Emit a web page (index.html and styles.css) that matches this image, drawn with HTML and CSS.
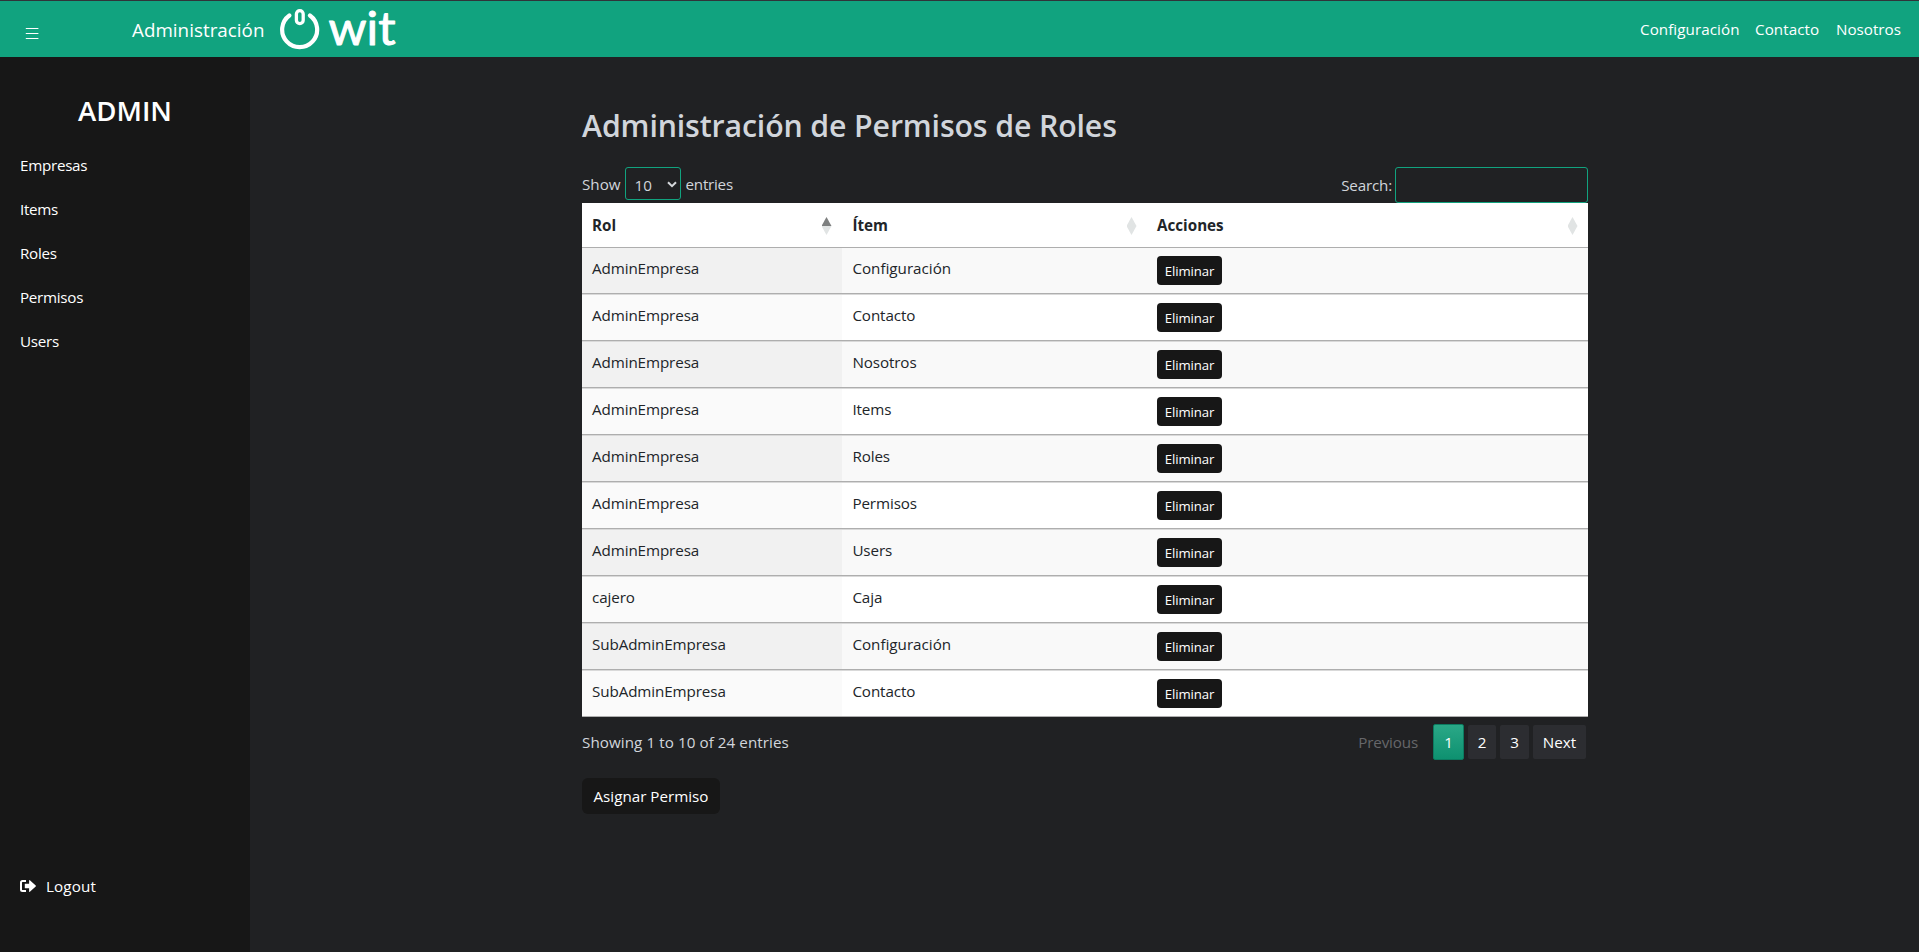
FILE: index.html
```html
<!DOCTYPE html>
<html lang="es">
<head>
<meta charset="utf-8">
<title>Administración</title>
<link rel="stylesheet" href="styles.css">
</head>
<body>
<header class="topbar">
  <svg class="menu-icon" width="14" height="13" viewBox="0 0 14 13"><path d="M.8 1.500h12.600M.8 6.500h12.600M.8 11.500h12.600" stroke="#fff" stroke-width="1.200"/></svg>
  <span class="brand">Administración</span>
  <svg class="logo" width="118" height="56" viewBox="0 -7 118 56">
    <g fill="none" stroke="#fff" stroke-linecap="round">
      <path d="M9.350 7.500A17.500 17.500 0 1 0 29.950 7.500" stroke-width="4.200"/>
      <rect x="16.400" y="2.600" width="6.800" height="13" rx="3.400" stroke-width="3.300"/>
    </g>
    <text class="logo-text" x="48.500" y="37.300" textLength="67" lengthAdjust="spacingAndGlyphs">wit</text>
  </svg>
  <nav class="topnav"><a class="n1">Configuración</a><a class="n2">Contacto</a><a class="n3">Nosotros</a></nav>
</header>
<div class="layout">
  <aside class="sidebar">
    <h3 class="side-title">ADMIN</h3>
    <nav class="side-nav"><a>Empresas</a><a>Items</a><a>Roles</a><a>Permisos</a><a>Users</a></nav>
    <a class="logout"><svg width="16" height="12" viewBox="0 0 16 12"><path d="M6 1H2.500Q1 1 1 2.500v7Q1 11 2.500 11H6" fill="none" stroke="#fff" stroke-width="2"/><path d="M4.800 3.800h4.300V.6Q9.200-.2 9.900.3l5.800 5.100q.5.600 0 1.200L9.900 11.700q-.7.500-.8-.3V8.200H4.800z" fill="#fff"/></svg><span>Logout</span></a>
  </aside>
  <main class="content">
    <h2 class="title">Administración de Permisos de Roles</h2>
    <div class="controls">
      <label class="length">Show <span class="select-wrap"><select><option>10</option></select><svg width="10" height="7" viewBox="0 0 10 7"><path d="M1 1.200l4 4 4-4" fill="none" stroke="#d5d8dc" stroke-width="2"/></svg></span> <span class="entries">entries</span></label>
      <label class="search">Search:<input type="text"></label>
    </div>
    <table class="roles">
      <colgroup><col class="c1"><col class="c2"><col class="c3"></colgroup>
      <thead><tr>
        <th><div>Rol<i class="sort asc"></i></div></th>
        <th><div>Ítem<i class="sort"></i></div></th>
        <th><div>Acciones<i class="sort"></i></div></th>
      </tr></thead>
      <tbody>
        <tr><td>AdminEmpresa</td><td class="conf">Configuración</td><td><button>Eliminar</button></td></tr>
        <tr><td>AdminEmpresa</td><td>Contacto</td><td><button>Eliminar</button></td></tr>
        <tr><td>AdminEmpresa</td><td>Nosotros</td><td><button>Eliminar</button></td></tr>
        <tr><td>AdminEmpresa</td><td>Items</td><td><button>Eliminar</button></td></tr>
        <tr><td>AdminEmpresa</td><td>Roles</td><td><button>Eliminar</button></td></tr>
        <tr><td>AdminEmpresa</td><td>Permisos</td><td><button>Eliminar</button></td></tr>
        <tr><td>AdminEmpresa</td><td>Users</td><td><button>Eliminar</button></td></tr>
        <tr><td>cajero</td><td>Caja</td><td><button>Eliminar</button></td></tr>
        <tr><td>SubAdminEmpresa</td><td class="conf">Configuración</td><td><button>Eliminar</button></td></tr>
        <tr><td>SubAdminEmpresa</td><td>Contacto</td><td><button>Eliminar</button></td></tr>
      </tbody>
    </table>
    <div class="footer">
      <span class="info">Showing 1 to 10 of 24 entries</span>
      <div class="pager"><span class="prev">Previous</span><span class="page active">1</span><span class="page p2">2</span><span class="page p3">3</span><span class="page next">Next</span></div>
    </div>
    <button class="assign">Asignar Permiso</button>
  </main>
</div>
</body>
</html>
```
FILE: styles.css
```css
* { box-sizing: border-box; }
body {
  margin: 0;
  height: 952px;
  overflow: hidden;
  display: flex;
  flex-direction: column;
  background: #202123;
  color: #d1d5db;
  font: 15.2px/24px "Open Sans", "Noto Sans", sans-serif;
}
button, select, input { font: inherit; margin: 0; }
.topbar {
  height: 57px;
  flex: none;
  display: flex;
  align-items: flex-start;
  background: #11a37f;
  border-top: 1px solid #303439;
  color: #fff;
}
.menu-icon { margin: 26px 0 0 25px; }
.brand { margin: 16px 0 0 93px; width: 148px; font-size: 18.8px; line-height: 26px; letter-spacing: .03px; }
.logo-text {
  font: 400 46px Lato, sans-serif;
  fill: #fff;
  stroke: #fff;
  stroke-width: .9px;
  stroke-linejoin: round;
}
.topnav { display: flex; margin: 16px 18px 0 auto; }
.n1 { width: 115px; letter-spacing: .06px; }
.n2 { width: 81px; letter-spacing: .06px; }
.n3 { width: 65px; }
.layout { flex: 1; display: flex; }
.sidebar {
  width: 250px;
  display: flex;
  flex-direction: column;
  background: #171717;
  color: #fff;
}
.side-title {
  margin: 33px 0 0;
  text-align: center;
  font-size: 27.6px;
  line-height: 40px;
  font-weight: 600;
}
.side-nav { display: flex; flex-direction: column; padding: 13px 20px; }
.side-nav a { height: 44px; padding: 10px 0; letter-spacing: -.28px; }
.logout { display: flex; margin: auto 20px 54px; align-items: center; gap: 10px; letter-spacing: .15px; }
.content { margin-left: 332px; width: 1006px; padding-top: 50px; }
.title { margin: 0; height: 60px; font-size: 30.3px; line-height: 38px; font-weight: 600; letter-spacing: -.14px; color: #d1d5db; }
.controls { display: flex; justify-content: space-between; height: 36px; }
.length { display: flex; height: 33px; line-height: 34px; }
.select-wrap { position: relative; margin: 0 5px 0 4px; }
.select-wrap select {
  appearance: none;
  display: block;
  width: 56px;
  height: 33px;
  padding: 0 0 0 9px;
  background: transparent;
  border: 1px solid #11a37f;
  border-radius: 3px;
  color: #d1d5db;
}
.select-wrap svg { position: absolute; right: 4px; top: 14px; }
.entries { letter-spacing: -.25px; }
.search { display: flex; line-height: 36px; gap: 3px; letter-spacing: -.18px; }
.search input {
  width: 193px;
  height: 36px;
  background: transparent;
  border: 1px solid #11a37f;
  border-radius: 3px;
}
.roles { width: 1006px; table-layout: fixed; border-collapse: separate; border-spacing: 0; background: #fff; color: #212529; }
.c1 { width: 260px; }
.c2 { width: 305px; }
.c3 { width: 441px; }
.roles th { padding: 10px; height: 45px; border-bottom: 1px solid #aeaeae; text-align: left; font-weight: 700; }
.roles th div { display: flex; justify-content: space-between; align-items: center; height: 24px; }
.sort { width: 10px; height: 18px; display: flex; flex-direction: column; position: relative; top: 1px; right: .5px; }
.sort::before, .sort::after { content: ""; height: 9px; background: #e1e4e4; }
.sort::before { clip-path: polygon(50% 0, 100% 100%, 0 100%); }
.sort::after { clip-path: polygon(0 0, 100% 0, 50% 100%); }
.asc::before { background: #7d7f7f; }
.roles td { height: 47px; padding: 8px 10px; vertical-align: top; border-top: 1px solid #d9d9d9; border-bottom: 1px solid #aeaeae; letter-spacing: -.1px; }
.roles td:nth-child(2), .roles th:nth-child(2) { padding-left: 10.4px; }
.roles tr:first-child td { height: 46px; border-top: 0; }
.roles tbody tr:nth-child(odd) td { background: #f9f9f9; }
.roles tbody tr:nth-child(odd) td:first-child { background: #f1f1f1; }
.roles tbody tr:nth-child(even) td:first-child { background: #fafafa; }
.roles td.conf { letter-spacing: 0; }
.roles button {
  display: block;
  width: 65px;
  height: 29px;
  padding: 1px 0 0;
  border: 0;
  border-radius: 4px;
  background: #171717;
  color: #fff;
  font-size: 13.2px;
  line-height: 28px;
  letter-spacing: -.1px;
}
.footer { display: flex; justify-content: space-between; height: 61px; padding-top: 7px; }
.info { margin-top: 6px; letter-spacing: .07px; }
.pager { display: flex; align-items: center; height: 36px; padding-right: 2px; color: #fff; }
.prev { margin-right: 15px; color: #66676a; letter-spacing: -.15px; }
.page { height: 34px; line-height: 34px; text-align: center; background: #2c2d31; border-radius: 2px; }
.active { width: 31px; height: 36px; margin-right: 4px; border: 1px solid #0c7b60; background: linear-gradient(#2aa887, #0e9170); }
.p2 { width: 28px; margin-right: 4px; }
.p3 { width: 29px; margin-right: 4px; }
.next { width: 53px; }
.assign { width: 138px; height: 36px; padding: 0; border: 0; border-radius: 6px; background: #171717; color: #fff; }
```
